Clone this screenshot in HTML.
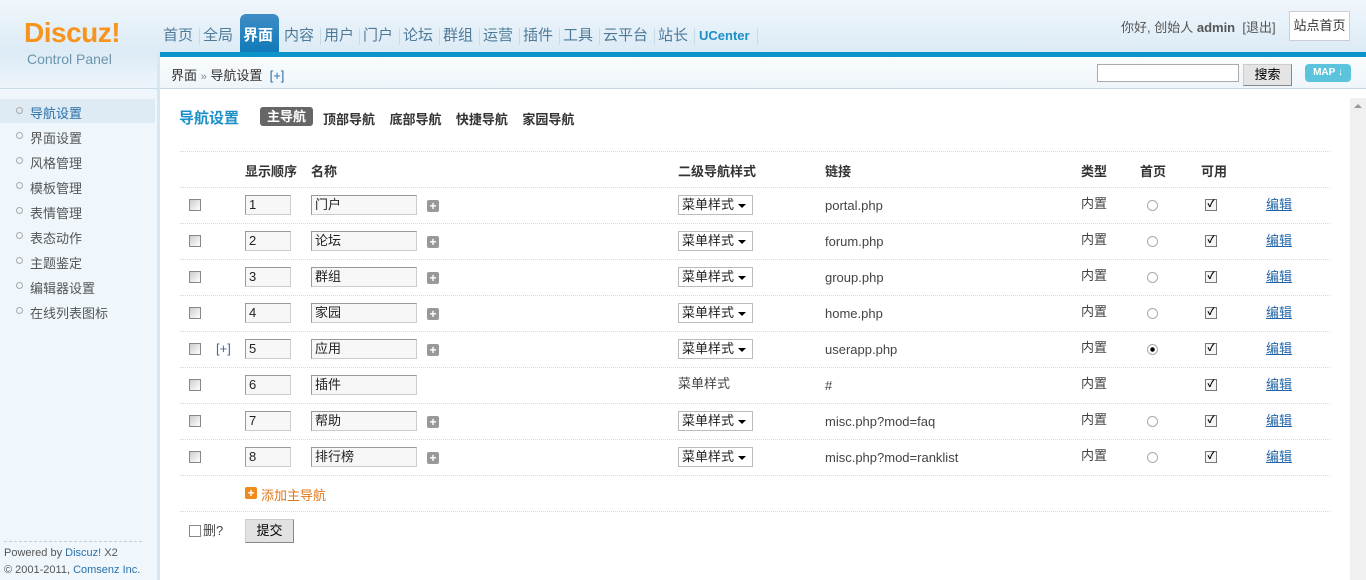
<!DOCTYPE html>
<html><head><meta charset="utf-8"><style>
*{margin:0;padding:0;box-sizing:border-box}
body{width:1366px;height:580px;overflow:hidden;background:#fff;font-family:"Liberation Sans","Noto Sans CJK SC",sans-serif;font-size:12px;color:#333;position:relative}
.a{position:absolute;white-space:nowrap}
#hd{left:0;top:0;width:1366px;height:52px;background:linear-gradient(#f0f6fb,#dcebf6)}
.nav{top:27px;font-size:15px;color:#4e7a98;line-height:18px}
.sep{top:28px;width:1px;height:17px;background:#c8dbe8}
.line{height:0;border-top:1px dotted #cfdde6;left:180px;width:1150px}
.cb{width:12px;height:12px;border:1px solid #888;background:linear-gradient(135deg,#ccc,#fff)}
.inp{height:20px;border:1px solid #999;border-right-color:#ccc;border-bottom-color:#ccc;background:#f7f7f7;font-size:13px;line-height:18px;padding-left:3px;color:#222}
.plus{width:12px;height:12px;background:#999;border-radius:2px;color:#fff;font-size:12px;font-weight:bold;line-height:12px;text-align:center}
.sel{width:75px;height:20px;border:1px solid #bbb;background:#fff;font-size:13px;line-height:18px;padding-left:3px;color:#222}
.sel:after{content:"";position:absolute;right:6px;top:8px;border:4px solid transparent;border-top:4px solid #000;border-bottom:0}
.t13{font-size:13px;color:#444;line-height:16px}
.rad{width:11px;height:11px;border-radius:50%;border:1px solid #aaa;background:#fff}
.chk{width:12px;height:12px;border:1px solid #777;background:#f4f4f4;font-size:10px;line-height:10px;text-align:center;color:#000;font-weight:bold}
.ed{font-size:13px;color:#2366a8;text-decoration:underline;line-height:16px}
.th{font-size:13px;font-weight:bold;color:#333;top:161px}
.sb{left:30px;font-size:13px;color:#555}
.dot{left:16px;width:7px;height:7px;border:1px solid #aaa;border-radius:50%}
</style></head><body>
<div class="a" id="hd"></div>
<div class="a" style="left:0;top:52px;width:157px;height:37px;background:linear-gradient(#dcebf6,#eef5fa)"></div>
<div class="a" style="left:0;top:89px;width:157px;height:491px;background:#eff7fc"></div>
<div class="a" style="left:0;top:88px;width:157px;height:1px;background:#c9dce8"></div>
<div class="a" style="left:24px;top:16px;font-size:28px;font-weight:bold;color:#f7941d;letter-spacing:-0.5px;line-height:34px">Discuz!</div>
<div class="a" style="left:27px;top:51px;font-size:14px;color:#6b95ad;line-height:16px">Control Panel</div>
<div class="a" style="left:240px;top:14px;width:39px;height:40px;border-radius:6px 6px 0 0;background:linear-gradient(#3f8cc6,#0e7ab8)"></div>
<div class="a nav" style="left:163px">首页</div><div class="a sep" style="left:199px"></div>
<div class="a nav" style="left:203px">全局</div>
<div class="a nav" style="left:243px;color:#fff;font-weight:bold">界面</div>
<div class="a nav" style="left:284px">内容</div><div class="a sep" style="left:320px"></div>
<div class="a nav" style="left:324px">用户</div><div class="a sep" style="left:359px"></div>
<div class="a nav" style="left:363px">门户</div><div class="a sep" style="left:399px"></div>
<div class="a nav" style="left:403px">论坛</div><div class="a sep" style="left:439px"></div>
<div class="a nav" style="left:443px">群组</div><div class="a sep" style="left:479px"></div>
<div class="a nav" style="left:483px">运营</div><div class="a sep" style="left:519px"></div>
<div class="a nav" style="left:523px">插件</div><div class="a sep" style="left:559px"></div>
<div class="a nav" style="left:563px">工具</div><div class="a sep" style="left:599px"></div>
<div class="a nav" style="left:603px">云平台</div><div class="a sep" style="left:654px"></div>
<div class="a nav" style="left:658px">站长</div><div class="a sep" style="left:694px"></div>
<div class="a nav" style="left:699px;font-size:13px;font-weight:bold;color:#1a8fc8">UCenter</div><div class="a sep" style="left:757px"></div>
<div class="a" style="left:1121px;top:17px;font-size:13px;color:#555">你好, 创始人 <b>admin</b> &nbsp;[退出]</div>
<div class="a" style="left:1289px;top:11px;width:61px;height:30px;border:1px solid #ccd;background:#fff;font-size:13px;line-height:28px;text-align:center;color:#333">站点首页</div>
<div class="a" style="left:159px;top:52px;width:1207px;height:5px;background:#0d95c9"></div>
<div class="a" style="left:157px;top:52px;width:3px;height:528px;background:#d7e7f2"></div>
<div class="a" style="left:160px;top:57px;width:1206px;height:32px;background:linear-gradient(#fafcfe,#eef5fa);border-bottom:1px solid #c6d6e2"></div>
<div class="a" style="left:171px;top:65px;font-size:13px;color:#333">界面 <span style="color:#888;font-size:11px">»</span> 导航设置 &nbsp;<span style="color:#2a6fa8">[+]</span></div>
<div class="a" style="left:1097px;top:64px;width:142px;height:18px;border:1px solid #aaa;background:#fff"></div>
<div class="a" style="left:1243px;top:64px;width:49px;height:22px;border:1px solid #888;border-top-color:#ccc;border-left-color:#ccc;background:#e4e4e4;font-size:13px;text-align:center;line-height:20px;color:#000">搜索</div>
<div class="a" style="left:1305px;top:64px;width:46px;height:18px;border-radius:4px;background:#5cc3dc;color:#fff;font-size:10px;font-weight:bold;text-align:center;line-height:18px">MAP ↓</div>
<div class="a" style="left:1350px;top:98px;width:16px;height:482px;background:#f0f0f0"></div>
<div class="a" style="left:1354px;top:104px;border:4px solid transparent;border-bottom:4px solid #999;border-top:0"></div>

<div class="a" style="left:0;top:99px;width:155px;height:24px;background:#deebf5"></div>
<div class="a dot" style="top:107px"></div><div class="a sb" style="top:103px;color:#2a6fa8">导航设置</div>
<div class="a dot" style="top:132px"></div><div class="a sb" style="top:128px">界面设置</div>
<div class="a dot" style="top:157px"></div><div class="a sb" style="top:153px">风格管理</div>
<div class="a dot" style="top:182px"></div><div class="a sb" style="top:178px">模板管理</div>
<div class="a dot" style="top:207px"></div><div class="a sb" style="top:203px">表情管理</div>
<div class="a dot" style="top:232px"></div><div class="a sb" style="top:228px">表态动作</div>
<div class="a dot" style="top:257px"></div><div class="a sb" style="top:253px">主题鉴定</div>
<div class="a dot" style="top:282px"></div><div class="a sb" style="top:278px">编辑器设置</div>
<div class="a dot" style="top:307px"></div><div class="a sb" style="top:303px">在线列表图标</div>
<div class="a" style="left:4px;top:541px;width:138px;border-top:1px dashed #ccc"></div>
<div class="a" style="left:4px;top:547px;font-size:11px;color:#555">Powered by <span style="color:#2a6fa8">Discuz!</span> X2</div>
<div class="a" style="left:4px;top:564px;font-size:11px;color:#555">© 2001-2011, <span style="color:#2a6fa8">Comsenz Inc.</span></div>

<div class="a" style="left:179px;top:107px;font-size:15px;font-weight:bold;color:#1a8fc8">导航设置</div>
<div class="a" style="left:260px;top:107px;width:53px;height:19px;border-radius:3px;background:#666;color:#fff;font-size:13px;font-weight:bold;text-align:center;line-height:19px">主导航</div>
<div class="a" style="left:323px;top:109px;font-size:13px;font-weight:bold;color:#333">顶部导航 &nbsp; &nbsp;底部导航 &nbsp; &nbsp;快捷导航 &nbsp; &nbsp;家园导航</div>

<div class="a line" style="top:151px"></div>
<div class="a th" style="left:245px">显示顺序</div><div class="a th" style="left:311px">名称</div>
<div class="a th" style="left:678px">二级导航样式</div><div class="a th" style="left:825px">链接</div>
<div class="a th" style="left:1081px">类型</div><div class="a th" style="left:1140px">首页</div><div class="a th" style="left:1201px">可用</div>

<div class="a line" style="top:187px"></div>
<div class="a line" style="top:223px"></div>
<div class="a line" style="top:259px"></div>
<div class="a line" style="top:295px"></div>
<div class="a line" style="top:331px"></div>
<div class="a line" style="top:367px"></div>
<div class="a line" style="top:403px"></div>
<div class="a line" style="top:439px"></div>
<div class="a line" style="top:475px"></div>
<div class="a line" style="top:511px"></div>

<div class="a cb" style="left:189px;top:199px"></div><div class="a inp" style="left:245px;top:195px;width:46px">1</div><div class="a inp" style="left:311px;top:195px;width:106px">门户</div><div class="a plus" style="left:427px;top:200px">+</div><div class="a sel" style="left:678px;top:195px">菜单样式</div><div class="a t13" style="left:825px;top:198px">portal.php</div><div class="a t13" style="left:1081px;top:196px">内置</div><div class="a rad" style="left:1147px;top:200px"></div><div class="a chk" style="left:1205px;top:199px">✓</div><div class="a ed" style="left:1266px;top:197px">编辑</div>

<div class="a cb" style="left:189px;top:235px"></div><div class="a inp" style="left:245px;top:231px;width:46px">2</div><div class="a inp" style="left:311px;top:231px;width:106px">论坛</div><div class="a plus" style="left:427px;top:236px">+</div><div class="a sel" style="left:678px;top:231px">菜单样式</div><div class="a t13" style="left:825px;top:234px">forum.php</div><div class="a t13" style="left:1081px;top:232px">内置</div><div class="a rad" style="left:1147px;top:236px"></div><div class="a chk" style="left:1205px;top:235px">✓</div><div class="a ed" style="left:1266px;top:233px">编辑</div>

<div class="a cb" style="left:189px;top:271px"></div><div class="a inp" style="left:245px;top:267px;width:46px">3</div><div class="a inp" style="left:311px;top:267px;width:106px">群组</div><div class="a plus" style="left:427px;top:272px">+</div><div class="a sel" style="left:678px;top:267px">菜单样式</div><div class="a t13" style="left:825px;top:270px">group.php</div><div class="a t13" style="left:1081px;top:268px">内置</div><div class="a rad" style="left:1147px;top:272px"></div><div class="a chk" style="left:1205px;top:271px">✓</div><div class="a ed" style="left:1266px;top:269px">编辑</div>

<div class="a cb" style="left:189px;top:307px"></div><div class="a inp" style="left:245px;top:303px;width:46px">4</div><div class="a inp" style="left:311px;top:303px;width:106px">家园</div><div class="a plus" style="left:427px;top:308px">+</div><div class="a sel" style="left:678px;top:303px">菜单样式</div><div class="a t13" style="left:825px;top:306px">home.php</div><div class="a t13" style="left:1081px;top:304px">内置</div><div class="a rad" style="left:1147px;top:308px"></div><div class="a chk" style="left:1205px;top:307px">✓</div><div class="a ed" style="left:1266px;top:305px">编辑</div>

<div class="a cb" style="left:189px;top:343px"></div><div class="a" style="left:216px;top:341px;font-size:13px;color:#2a6fa8">[+]</div><div class="a inp" style="left:245px;top:339px;width:46px">5</div><div class="a inp" style="left:311px;top:339px;width:106px">应用</div><div class="a plus" style="left:427px;top:344px">+</div><div class="a sel" style="left:678px;top:339px">菜单样式</div><div class="a t13" style="left:825px;top:342px">userapp.php</div><div class="a t13" style="left:1081px;top:340px">内置</div><div class="a rad" style="left:1147px;top:344px;background:radial-gradient(#000 30%,#fff 40%)"></div><div class="a chk" style="left:1205px;top:343px">✓</div><div class="a ed" style="left:1266px;top:341px">编辑</div>

<div class="a cb" style="left:189px;top:379px"></div><div class="a inp" style="left:245px;top:375px;width:46px">6</div><div class="a inp" style="left:311px;top:375px;width:106px">插件</div><div class="a t13" style="left:678px;top:376px">菜单样式</div><div class="a t13" style="left:825px;top:378px">#</div><div class="a t13" style="left:1081px;top:376px">内置</div><div class="a chk" style="left:1205px;top:379px">✓</div><div class="a ed" style="left:1266px;top:377px">编辑</div>

<div class="a cb" style="left:189px;top:415px"></div><div class="a inp" style="left:245px;top:411px;width:46px">7</div><div class="a inp" style="left:311px;top:411px;width:106px">帮助</div><div class="a plus" style="left:427px;top:416px">+</div><div class="a sel" style="left:678px;top:411px">菜单样式</div><div class="a t13" style="left:825px;top:414px">misc.php?mod=faq</div><div class="a t13" style="left:1081px;top:412px">内置</div><div class="a rad" style="left:1147px;top:416px"></div><div class="a chk" style="left:1205px;top:415px">✓</div><div class="a ed" style="left:1266px;top:413px">编辑</div>

<div class="a cb" style="left:189px;top:451px"></div><div class="a inp" style="left:245px;top:447px;width:46px">8</div><div class="a inp" style="left:311px;top:447px;width:106px">排行榜</div><div class="a plus" style="left:427px;top:452px">+</div><div class="a sel" style="left:678px;top:447px">菜单样式</div><div class="a t13" style="left:825px;top:450px">misc.php?mod=ranklist</div><div class="a t13" style="left:1081px;top:448px">内置</div><div class="a rad" style="left:1147px;top:452px"></div><div class="a chk" style="left:1205px;top:451px">✓</div><div class="a ed" style="left:1266px;top:449px">编辑</div>

<div class="a plus" style="left:245px;top:487px;background:#f08a1c">+</div>
<div class="a" style="left:261px;top:485px;font-size:13px;color:#e0761a">添加主导航</div>
<div class="a cb" style="left:189px;top:525px;background:#fff"></div>
<div class="a t13" style="left:203px;top:523px">删?</div>
<div class="a" style="left:245px;top:519px;width:49px;height:24px;border:1px solid #888;border-top-color:#ccc;border-left-color:#ccc;background:#e2e2e2;font-size:13px;text-align:center;line-height:22px;color:#000">提交</div>
</body></html>
